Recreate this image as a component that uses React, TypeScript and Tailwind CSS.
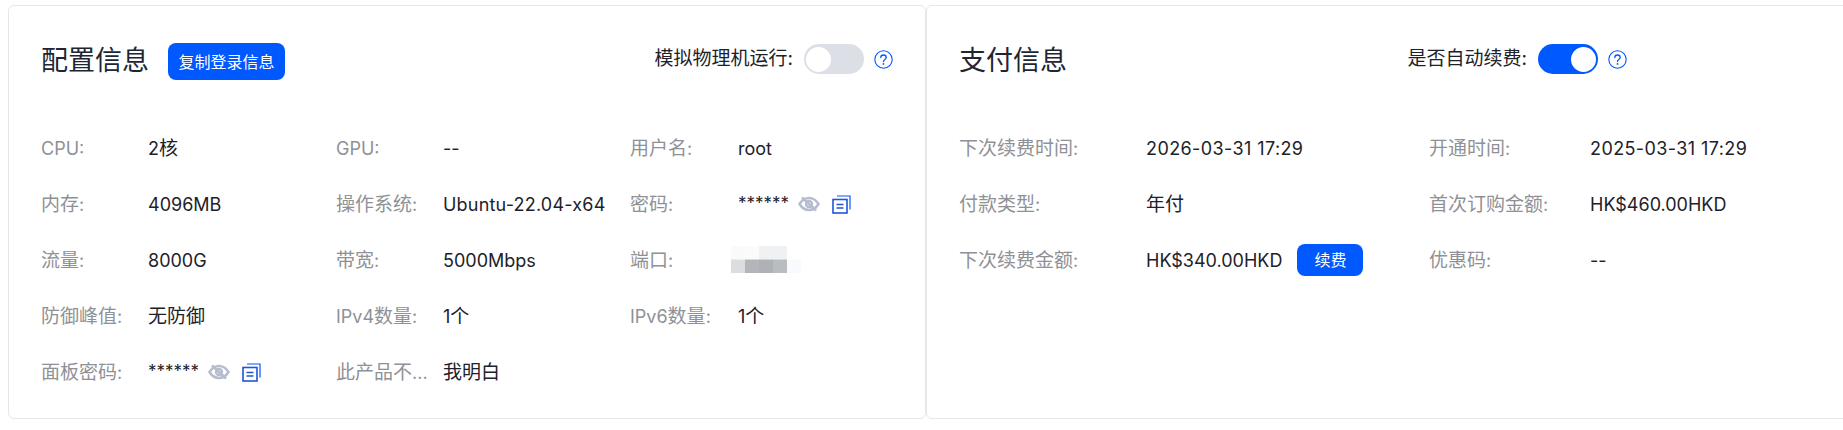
import { ReactNode } from 'react'

const fontStack = { fontFamily: 'Inter, "Noto Sans CJK SC", sans-serif' }

// the CJK glyphs in the reference run a bit larger than the latin text next to them
function Mixed({ text }: { text: string }) {
  return (
    <>
      {text.split(/([\u4e00-\u9fff]+)/).map((part, i) =>
        i % 2 === 1 ? (
          <span key={i} className="text-[19px] leading-none">{part}</span>
        ) : (
          <span key={i}>{part}</span>
        )
      )}
    </>
  )
}

function HelpIcon() {
  return (
    <svg width="19" height="19" viewBox="0 0 19 19" fill="none" className="ml-[10px] shrink-0">
      <circle cx="9.5" cy="9.5" r="8.7" stroke="#0058ff" strokeWidth="1.1" />
      <path
        d="M6.8 7.6C6.8 6.1 8 5 9.5 5s2.7 1.1 2.7 2.4c0 1.1-.7 1.6-1.4 2.1-.8.5-1.3 1-1.3 2"
        stroke="#0058ff"
        strokeWidth="1.3"
        strokeLinecap="round"
      />
      <circle cx="9.5" cy="13.9" r="0.9" fill="#0058ff" />
    </svg>
  )
}

function EyeOff() {
  return (
    <svg width="22" height="16" viewBox="0 0 22 16" fill="none" className="shrink-0">
      <path
        d="M1.5 8C4 4 7 2 11 2S18 4 20.5 8C18 12 15 14 11 14S4 12 1.5 8Z"
        stroke="#b7bdcf"
        strokeWidth="2.6"
      />
      <circle cx="11" cy="8" r="3" stroke="#b7bdcf" strokeWidth="2.4" />
      <path d="M4 1.5L18 14.5" stroke="#b7bdcf" strokeWidth="2.8" />
    </svg>
  )
}

function CopyIcon() {
  return (
    <svg width="19" height="19" viewBox="0 0 19 19" fill="none" className="shrink-0">
      <path d="M5 1H18V14.5" stroke="#0058ff" strokeWidth="1.2" />
      <rect x="1" y="4.5" width="14" height="13.5" stroke="#1f55d8" strokeWidth="1.6" />
      <path d="M4.5 9.5H11.5M4.5 13H11.5" stroke="#1f55d8" strokeWidth="1.5" />
    </svg>
  )
}

function Secret() {
  return (
    <div className="flex items-center">
      <span className="w-[49px] text-[17px]">******</span>
      <span className="ml-[11px]"><EyeOff /></span>
      <span className="ml-[12px]"><CopyIcon /></span>
    </div>
  )
}

function Toggle({ on }: { on: boolean }) {
  return (
    <div
      className={
        on
          ? 'flex h-[30px] w-[60px] items-center justify-end rounded-full bg-[#0058ff] px-[2px]'
          : 'flex h-[30px] w-[60px] items-center justify-start rounded-full bg-[#dcdfe6] px-[2px]'
      }
    >
      <div className="h-[25px] w-[25px] rounded-full bg-white" />
    </div>
  )
}

function SwitchField({ label, on }: { label: string; on: boolean }) {
  return (
    <div className="flex items-center">
      <span className="mr-[11px] text-[19px] text-[#1d2129]">{label}:</span>
      <Toggle on={on} />
      <HelpIcon />
    </div>
  )
}

function Field({
  label,
  labelClass = 'w-[107px]',
  children
}: {
  label: string
  labelClass?: string
  children: ReactNode
}) {
  return (
    <div className="flex h-[56px] items-center text-[18px]">
      <span className={`${labelClass} shrink-0 text-[#8f9196]`}><Mixed text={label} /></span>
      <div className="whitespace-nowrap text-[#1d2129]">{children}</div>
    </div>
  )
}

// pixelated port number, same as the blurred patch in the dashboard export
const mosaic = [
  ['#fafafa', '#fbfbfb', '#f0f1f2', '#f0f1f2', '#ffffff'],
  ['#dcdde0', '#b3b6b9', '#aeb1b5', '#b9bdc0', '#f8fafd']
]

function BlurredPort() {
  return (
    <svg width="70" height="27" viewBox="0 0 70 27" className="block">
      {mosaic.map((row, y) =>
        row.map((color, x) => (
          <rect key={`${x}-${y}`} x={x * 14} y={y * 13.5} width="14" height="13.5" fill={color} />
        ))
      )}
    </svg>
  )
}

function ConfigCard() {
  return (
    <section className="h-[414px] w-[918px] shrink-0 rounded-[6px] border border-[#e6e7eb] bg-white px-[32px]">
      <header className="flex h-[106px] items-center justify-between">
        <div className="mt-[5px] flex items-center">
          <h2 className="text-[27px] font-normal text-[#1e2633]">配置信息</h2>
          <button className="ml-[19px] h-[37px] w-[117px] rounded-[8px] bg-[#0058ff] text-[16px] text-white">
            复制登录信息
          </button>
        </div>
        <SwitchField label="模拟物理机运行" on={false} />
      </header>
      <div className="mt-[8px] grid grid-cols-[295px_294px_1fr]">
        <Field label="CPU:"><Mixed text="2核" /></Field>
        <Field label="GPU:">--</Field>
        <Field label="用户名:" labelClass="w-[108px]">root</Field>
        <Field label="内存:">4096MB</Field>
        <Field label="操作系统:"><span className="tracking-[0.2px]">Ubuntu-22.04-x64</span></Field>
        <Field label="密码:" labelClass="w-[108px]"><Secret /></Field>
        <Field label="流量:">8000G</Field>
        <Field label="带宽:">5000Mbps</Field>
        <Field label="端口:" labelClass="w-[108px]"><div className="-ml-[7px] mt-[-2px]"><BlurredPort /></div></Field>
        <Field label="防御峰值:"><Mixed text="无防御" /></Field>
        <Field label="IPv4数量:"><Mixed text="1个" /></Field>
        <Field label="IPv6数量:" labelClass="w-[108px]"><Mixed text="1个" /></Field>
        <Field label="面板密码:"><Secret /></Field>
        <Field label="此产品不...">
          <span className="text-[19px] leading-none">我明白</span>
        </Field>
      </div>
    </section>
  )
}

function PaymentCard() {
  return (
    <section className="h-[414px] w-[960px] shrink-0 rounded-[6px] border border-[#e6e7eb] bg-white px-[32px]">
      <header className="flex h-[106px] w-[668px] items-center justify-between">
        <h2 className="mt-[5px] text-[27px] font-normal text-[#1e2633]">支付信息</h2>
        <SwitchField label="是否自动续费" on />
      </header>
      <div className="mt-[8px] grid grid-cols-[470px_1fr]">
        <Field label="下次续费时间:" labelClass="w-[187px]"><span className="tracking-[0.4px]">2026-03-31 17:29</span></Field>
        <Field label="开通时间:" labelClass="w-[161px]"><span className="tracking-[0.4px]">2025-03-31 17:29</span></Field>
        <Field label="付款类型:" labelClass="w-[187px]"><Mixed text="年付" /></Field>
        <Field label="首次订购金额:" labelClass="w-[161px]">HK$460.00HKD</Field>
        <Field label="下次续费金额:" labelClass="w-[187px]">
          <div className="flex items-center">
            <span>HK$340.00HKD</span>
            <button className="ml-[15px] h-[32px] w-[66px] rounded-[8px] bg-[#0058ff] text-[16px] text-white">
              续费
            </button>
          </div>
        </Field>
        <Field label="优惠码:" labelClass="w-[161px]">--</Field>
      </div>
    </section>
  )
}

export default function App() {
  return (
    <div
      className="flex h-[430px] w-[1843px] items-start overflow-hidden bg-white pl-[8px] pt-[5px]"
      style={fontStack}
    >
      <ConfigCard />
      <PaymentCard />
    </div>
  )
}
